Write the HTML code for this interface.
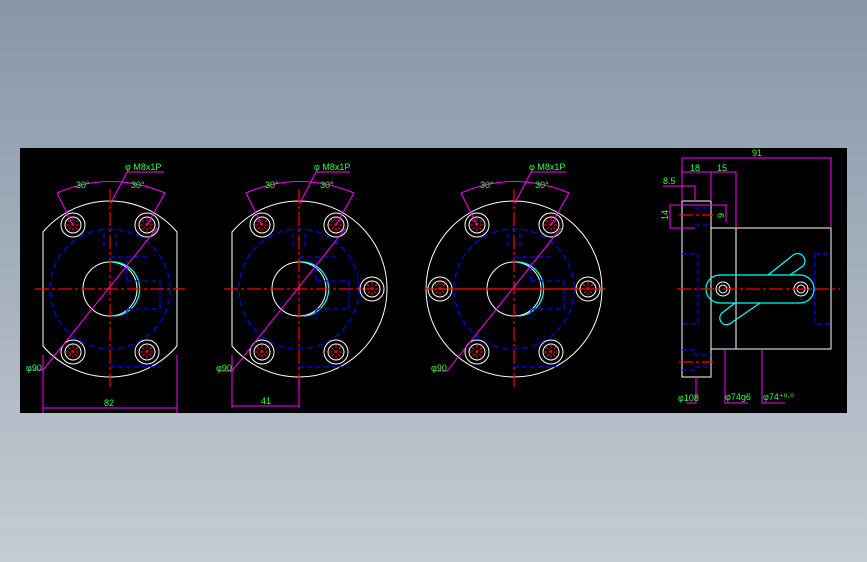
<!DOCTYPE html>
<html><head><style>
html,body{margin:0;padding:0;width:867px;height:562px;overflow:hidden;background:linear-gradient(#8796a8,#c5cbd3);}
svg{position:absolute;left:0;top:0}
text{font-family:"Liberation Sans",sans-serif;font-size:9px;fill:#33ff33}
</style></head><body>
<svg width="867" height="562" viewBox="0 0 867 562">
<defs>
<g id="hole">
<circle r="12" fill="none" stroke="#fff" stroke-width="1"/>
<circle r="8" fill="none" stroke="#fff" stroke-width="1"/>
<path d="M-7,0H7M0,-7V7M-5,-5L5,5M5,-5L-5,5" stroke="#f00" stroke-width="1" stroke-dasharray="3,2"/>
</g>
<g id="core">
<circle r="60" fill="none" stroke="#00f" stroke-width="1.2" stroke-dasharray="6,4"/>
<circle r="27" fill="none" stroke="#fff" stroke-width="1"/>
<path d="M0,-27 A27 27 0 0 1 5,27" fill="none" stroke="#0ff" stroke-width="1.2"/>
<path d="M-6,-43V-60M6,-43V-60M0,-32H40M0,78H50M17,-8H50V20H17M50,-8V20M17,-8V-28M17,20V30" fill="none" stroke="#00f" stroke-width="1.2" stroke-dasharray="5,3"/>
<path d="M-75,0H75M0,-100V100" stroke="#f00" stroke-width="1.2" stroke-dasharray="14,3,3,3"/>
</g>
</defs>
<rect x="20" y="148" width="827" height="265" fill="#000"/>

<g>
<path d="M43,232 A88 88 0 0 1 177,232 L177,346 A88 88 0 0 1 43,346 Z" fill="none" stroke="#fff"/>
<g transform="translate(110,289)"><use href="#core"/></g>
<use href="#hole" x="73" y="225"/><use href="#hole" x="147" y="225"/><use href="#hole" x="73" y="352"/><use href="#hole" x="147" y="352"/>
<path d="M43,355V413M177,355V413M43,408H177M28,370H43L157,228M111,203L127,172H164M57,193Q110,170 165,193M57,193L73,225M165,193L147,225" fill="none" stroke="#f0f" stroke-width="1"/>
<text x="125" y="170">φ M8x1P</text><text x="76" y="188">30°</text><text x="131" y="188">30°</text>
<text x="26" y="371">φ90</text><text x="104" y="406">82</text>
</g>

<g>
<path d="M232,232 A88 88 0 1 1 232,346 Z" fill="none" stroke="#fff"/>
<g transform="translate(299,289)"><use href="#core"/></g>
<use href="#hole" x="262" y="225"/><use href="#hole" x="336" y="225"/><use href="#hole" x="262" y="352"/><use href="#hole" x="336" y="352"/><use href="#hole" x="372" y="289"/>
<path d="M232,355V408M299,380V408M232,406H299M218,371H232L346,228M300,203L316,172H350M246,193Q299,170 354,193M246,193L262,225M354,193L336,225" fill="none" stroke="#f0f" stroke-width="1"/>
<text x="314" y="170">φ M8x1P</text><text x="265" y="188">30°</text><text x="320" y="188">30°</text>
<text x="216" y="371">φ90</text><text x="261" y="404">41</text>
</g>

<g>
<circle cx="514" cy="289" r="88" fill="none" stroke="#fff"/>
<g transform="translate(514,289)"><use href="#core"/></g>
<use href="#hole" x="477" y="225"/><use href="#hole" x="551" y="225"/><use href="#hole" x="477" y="352"/><use href="#hole" x="551" y="352"/><use href="#hole" x="440" y="289"/><use href="#hole" x="588" y="289"/>
<path d="M433,371H447L561,228M515,203L531,172H566M461,193Q514,170 569,193M461,193L477,225M569,193L551,225" fill="none" stroke="#f0f" stroke-width="1"/>
<path d="M425,289H605" stroke="#f00" stroke-width="1.2" stroke-dasharray="14,3,3,3"/>
<text x="529" y="170">φ M8x1P</text><text x="480" y="188">30°</text><text x="535" y="188">30°</text>
<text x="431" y="371">φ90</text>
</g>

<g fill="none">
<path d="M682,201H711V377H682Z M711,228H831V349H711Z M736,228V349" stroke="#fff"/>
<path d="M682,205H695V208H711 M682,228H695V225H711 M682,254H698V324H682 M682,350H695V355H711 M682,370H695V367H711 M815,254H831M815,254V324H831" stroke="#00f" stroke-width="1.2" stroke-dasharray="5,3"/>
<path d="M720,275H800A14 14 0 0 1 800,303H720A14 14 0 0 1 720,275Z M768,275L792,256A7 7 0 0 1 803,266L790,275 M760,303L731,323A6 6 0 0 1 722,313L735,303" stroke="#0ff" stroke-width="1.2"/>
<circle cx="723" cy="289" r="7" stroke="#fff"/><circle cx="723" cy="289" r="4" stroke="#fff"/>
<circle cx="801" cy="289" r="7" stroke="#fff"/><circle cx="801" cy="289" r="4" stroke="#fff"/>
<path d="M677,289H840M679,215H713M679,362H713" stroke="#f00" stroke-width="1.2" stroke-dasharray="14,3,3,3"/>
<path d="M682,158H831V228M682,158V201M682,172H711M711,172H736V228M711,172V201M663,186H695V201M670,205V228M670,205H727M670,228H695M726,205V222M696,376V403H686M725,349V403H748M762,349V403H785" stroke="#f0f"/>
</g>
<text x="752" y="156">91</text><text x="690" y="171">18</text><text x="717" y="171">15</text>
<text x="663" y="184">8.5</text>
<text x="668" y="220" transform="rotate(-90 668 220)">14</text>
<text x="724" y="218" transform="rotate(-90 724 218)">9</text>
<text x="678" y="401">φ108</text><text x="725" y="400">φ74g6</text><text x="763" y="400">φ74⁺⁰·⁰</text>
</svg>
</body></html>
